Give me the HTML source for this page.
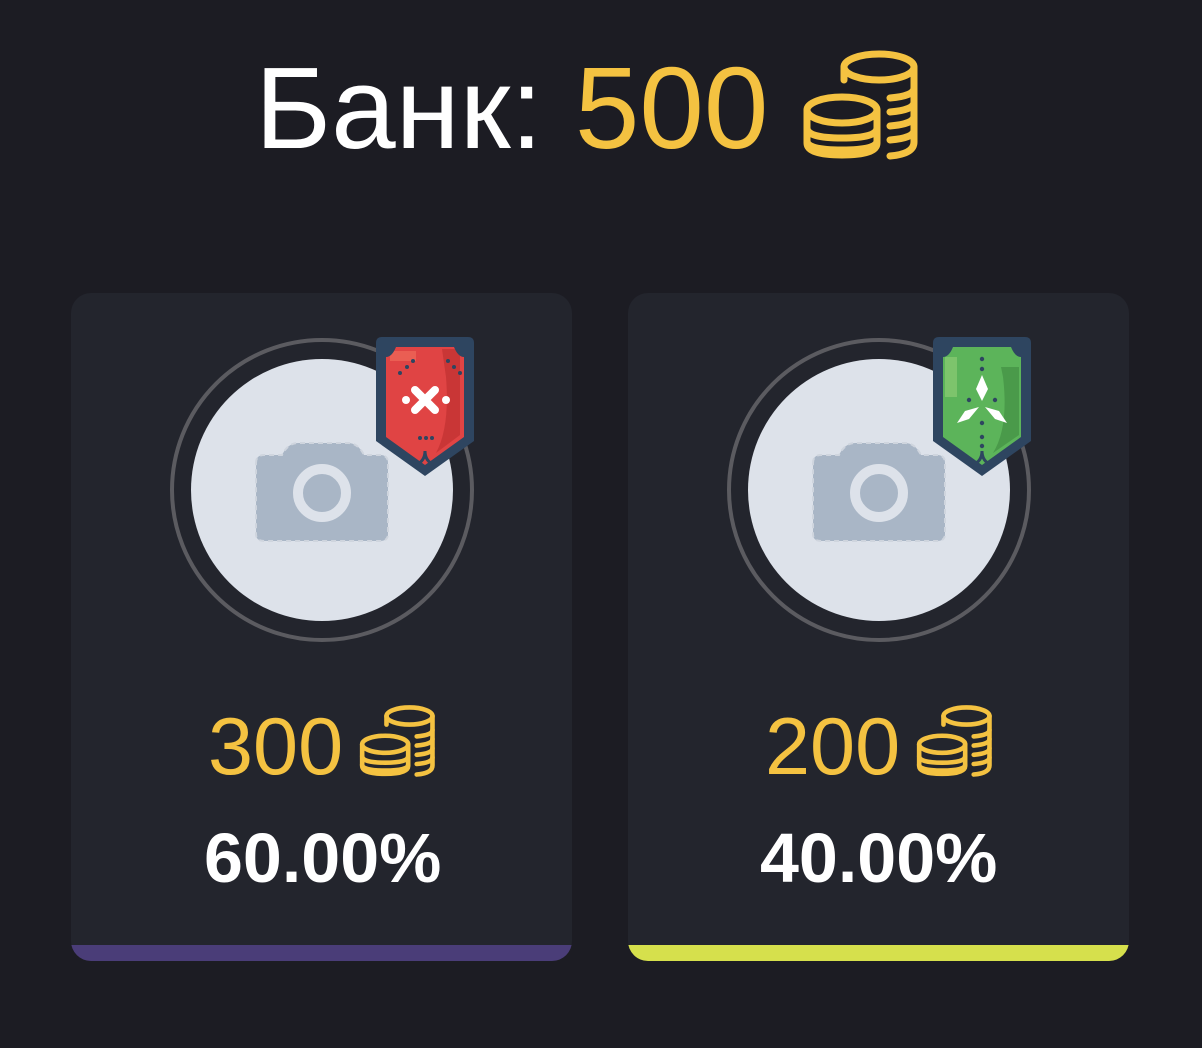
<!DOCTYPE html>
<html><head><meta charset="utf-8"><style>
html,body{margin:0;padding:0;background:#1c1c23;width:1202px;height:1048px;overflow:hidden;font-family:"Liberation Sans","DejaVu Sans",sans-serif}
.abs{position:absolute}
.card{position:absolute;top:293px;width:501px;height:668px;background:#23252d;border-radius:20px;overflow:hidden}
.bar{position:absolute;left:0;right:0;bottom:0;height:16px}
.t{position:absolute;white-space:nowrap;line-height:1}
</style></head><body>
<svg width="0" height="0" style="position:absolute">
<defs>
<g id="coins" fill="none" stroke="#f4c241" stroke-width="7" stroke-linecap="round">
<ellipse cx="89" cy="27" rx="35" ry="13"/>
<path d="M54 27 V40"/>
<path d="M124 27 V102 Q124 114 100 116"/>
<path d="M100 58 Q124 56 124 48"/>
<path d="M100 72 Q124 70 124 62"/>
<path d="M100 86 Q124 84 124 76"/>
<path d="M100 100 Q124 98 124 90"/>
<ellipse cx="52" cy="70" rx="35" ry="13"/>
<path d="M17 70 V103 Q17 115 52 115 Q87 115 87 103 V70"/>
<path d="M17 88 Q17 98 52 98 Q87 98 87 88"/>
<path d="M17 101 Q17 110 52 110 Q87 110 87 101"/>
</g>
<g id="avatar">
<circle cx="152" cy="152" r="150" fill="none" stroke="#5b5b60" stroke-width="4"/>
<circle cx="152" cy="152" r="131" fill="#dde2ea"/>
<path d="M86 125 Q86 117 94 117 L112 117 Q118 105 128 105 L178 105 Q188 105 194 117 L210 117 Q218 117 218 125 L218 196 Q218 203 210 203 L94 203 Q86 203 86 196 Z" fill="#a9b6c6" stroke="#cfd5de" stroke-width="2" stroke-dasharray="5 4"/>
<circle cx="152" cy="155" r="24" fill="none" stroke="#dde2ea" stroke-width="10"/>
</g>
</defs>
</svg>

<div class="t" style="left:255px;top:50px;font-size:116px;color:#fff">Банк: <span style="color:#f4c241">500</span></div>
<svg class="abs" style="left:790px;top:40px" width="140" height="130" viewBox="0 0 140 130"><use href="#coins"/></svg>

<div class="card" style="left:71px"><div class="bar" style="background:#4a3d78"></div></div>
<div class="card" style="left:628px"><div class="bar" style="background:#d6e04c"></div></div>

<svg class="abs" style="left:170px;top:338px" width="304" height="304" viewBox="0 0 304 304"><use href="#avatar"/></svg>
<svg class="abs" style="left:727px;top:338px" width="304" height="304" viewBox="0 0 304 304"><use href="#avatar"/></svg>

<!-- red badge -->
<svg class="abs" style="left:376px;top:337px" width="98" height="141" viewBox="0 0 98 141">
<path d="M6 0 H92 Q98 0 98 6 V104 L49 139 L0 104 V6 Q0 0 6 0Z" fill="#2e4560"/>
<path d="M10 10 H88 V100 L49 128 L10 100Z" fill="#e04444"/>
<path d="M66 12 H84 V98 L60 116 Q74 90 70 40Z" fill="#c93636"/>
<path d="M14 14 H40 V24 H14Z" fill="#ee6a5a" opacity=".7"/>
<path d="M10 10 L20 10 Q16 20 10 20Z M88 10 L78 10 Q82 20 88 20Z" fill="#2e4560"/>
<g fill="#2e4560"><circle cx="37" cy="24" r="2"/><circle cx="72" cy="24" r="2"/><circle cx="31" cy="30" r="2"/><circle cx="78" cy="30" r="2"/><circle cx="24" cy="36" r="2"/><circle cx="84" cy="36" r="2"/><circle cx="44" cy="101" r="2"/><circle cx="50" cy="101" r="2"/><circle cx="56" cy="101" r="2"/></g>
<path d="M39 53 L59 73 M59 53 L39 73" stroke="#fff" stroke-width="8" stroke-linecap="round"/>
<circle cx="30" cy="63" r="4" fill="#fff"/><circle cx="70" cy="63" r="4" fill="#fff"/>
<path d="M40 128 Q49 124 49 114 Q49 124 58 128" fill="none" stroke="#2e4560" stroke-width="3"/>
</svg>

<!-- green badge -->
<svg class="abs" style="left:933px;top:337px" width="98" height="141" viewBox="0 0 98 141">
<path d="M6 0 H92 Q98 0 98 6 V104 L49 139 L0 104 V6 Q0 0 6 0Z" fill="#2e4560"/>
<path d="M10 10 H88 V100 L49 128 L10 100Z" fill="#5cb45a"/>
<path d="M68 30 H86 V98 L60 116 Q76 90 70 40Z" fill="#4a9a4a"/>
<path d="M12 20 H24 V60 H12Z" fill="#86c870" opacity=".8"/>
<path d="M10 10 L20 10 Q16 20 10 20Z M88 10 L78 10 Q82 20 88 20Z" fill="#2e4560"/>
<g fill="#2e4560"><circle cx="49" cy="22" r="2.2"/><circle cx="49" cy="32" r="2.2"/><circle cx="36" cy="63" r="2.2"/><circle cx="62" cy="63" r="2.2"/><circle cx="49" cy="86" r="2.2"/><circle cx="49" cy="100" r="2.2"/><circle cx="49" cy="109" r="2.2"/></g>
<path d="M49 38 L55 52 L49 64 L43 52Z" fill="#fff"/>
<path d="M46 70 L36 82 L24 86 L32 74Z" fill="#fff"/>
<path d="M52 70 L62 82 L74 86 L66 74Z" fill="#fff"/>
<path d="M40 128 Q49 124 49 114 Q49 124 58 128" fill="none" stroke="#2e4560" stroke-width="3"/>
</svg>

<div class="t" style="left:208px;top:707px;font-size:81px;color:#f4c241">300</div>
<svg class="abs" style="left:351px;top:698px" width="92" height="86" viewBox="0 0 140 130"><use href="#coins"/></svg>
<div class="t" style="left:204px;top:823px;font-size:70px;font-weight:bold;color:#fff">60.00%</div>

<div class="t" style="left:765px;top:707px;font-size:81px;color:#f4c241">200</div>
<svg class="abs" style="left:908px;top:698px" width="92" height="86" viewBox="0 0 140 130"><use href="#coins"/></svg>
<div class="t" style="left:760px;top:823px;font-size:70px;font-weight:bold;color:#fff">40.00%</div>
</body></html>
